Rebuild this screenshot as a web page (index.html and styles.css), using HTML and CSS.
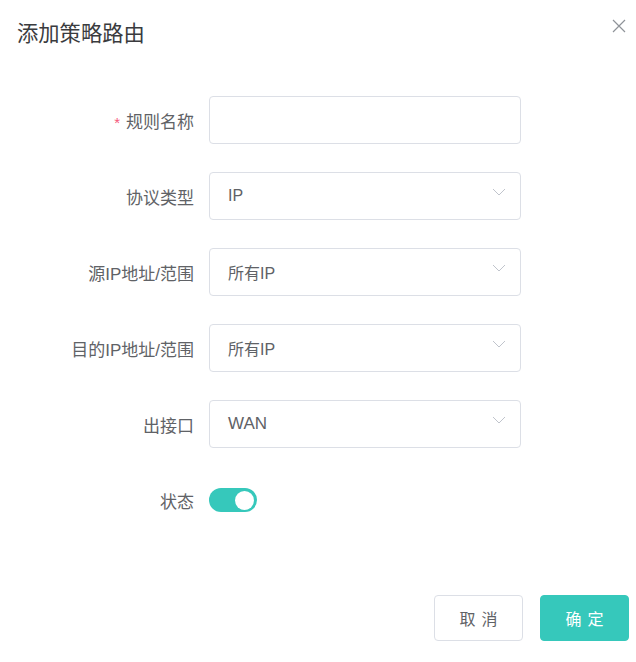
FILE: index.html
```html
<!DOCTYPE html>
<html lang="zh-CN">
<head>
<meta charset="utf-8">
<title>添加策略路由</title>
<link rel="stylesheet" href="styles.css">
</head>
<body>
<div class="dialog">
  <div class="header">
    <span class="title">添加策略路由</span>
    <svg class="close" width="14" height="14" viewBox="0 0 14 14"><path d="M1 1L13 13M13 1L1 13" stroke="#8f9399" stroke-width="1.2" fill="none"/></svg>
  </div>
  <div class="form">
    <div class="row">
      <label class="label"><span class="req">*</span>规则名称</label>
      <div class="control input"></div>
    </div>
    <div class="row">
      <label class="label">协议类型</label>
      <div class="control select"><span>IP</span><svg class="chev" width="14" height="8" viewBox="0 0 14 8"><path d="M1 1L7 7L13 1" stroke="#c0c4cc" stroke-width="1" fill="none"/></svg></div>
    </div>
    <div class="row">
      <label class="label">源IP地址/范围</label>
      <div class="control select"><span>所有IP</span><svg class="chev" width="14" height="8" viewBox="0 0 14 8"><path d="M1 1L7 7L13 1" stroke="#c0c4cc" stroke-width="1" fill="none"/></svg></div>
    </div>
    <div class="row">
      <label class="label">目的IP地址/范围</label>
      <div class="control select"><span>所有IP</span><svg class="chev" width="14" height="8" viewBox="0 0 14 8"><path d="M1 1L7 7L13 1" stroke="#c0c4cc" stroke-width="1" fill="none"/></svg></div>
    </div>
    <div class="row">
      <label class="label">出接口</label>
      <div class="control select"><span class="wan">WAN</span><svg class="chev" width="14" height="8" viewBox="0 0 14 8"><path d="M1 1L7 7L13 1" stroke="#c0c4cc" stroke-width="1" fill="none"/></svg></div>
    </div>
    <div class="row">
      <label class="label">状态</label>
      <div class="switch"><span class="knob"></span></div>
    </div>
  </div>
  <div class="footer">
    <button class="btn btn-cancel">取消</button>
    <button class="btn btn-ok">确定</button>
  </div>
</div>
</body>
</html>
```
FILE: styles.css
```css
html, body {
  margin: 0;
  padding: 0;
  background: #ffffff;
}
body {
  font-family: "Liberation Sans", "Noto Sans CJK SC", sans-serif;
  color: #606266;
}
.dialog {
  width: 636px;
  height: 662px;
  display: flex;
  flex-direction: column;
}
.header {
  display: flex;
  justify-content: space-between;
  align-items: center;
  padding: 16px 10px 0 17px;
  height: 32px;
}
.title {
  font-family: "Noto Sans CJK SC", sans-serif;
  font-size: 21.3px;
  line-height: 32px;
  color: #3a3b3e;
}
.close {
  margin-top: -12px;
}
.form {
  margin-top: 48px;
  display: flex;
  flex-direction: column;
  gap: 28px;
}
.row {
  display: flex;
  align-items: center;
  height: 48px;
}
.label {
  width: 194px;
  text-align: right;
  font-size: 17px;
  color: #606266;
  margin-right: 15px;
  flex-shrink: 0;
}
.req {
  color: #f5587b;
  margin-right: 6px;
  font-size: 15px;
}
.control {
  box-sizing: border-box;
  width: 312px;
  height: 48px;
  border: 1px solid #dcdfe6;
  border-radius: 4px;
  background: #fff;
}
.select {
  display: flex;
  align-items: center;
  justify-content: space-between;
  padding: 0 14px 0 18px;
  font-size: 16px;
  color: #606266;
}
.wan {
  font-size: 17px;
}
.chev {
  margin-top: -8px;
}
.switch {
  box-sizing: border-box;
  width: 48px;
  height: 24px;
  border-radius: 12px;
  background: #36c8bb;
  display: flex;
  align-items: center;
  justify-content: flex-end;
  padding-right: 3px;
}
.knob {
  width: 19px;
  height: 19px;
  border-radius: 50%;
  background: #fff;
}
.footer {
  margin-top: auto;
  margin-bottom: 21px;
  display: flex;
  justify-content: flex-end;
  gap: 17px;
  padding-right: 7px;
}
.btn {
  box-sizing: border-box;
  width: 89px;
  height: 46px;
  border-radius: 4px;
  font-family: "Noto Sans CJK SC", sans-serif;
  font-size: 16px;
  letter-spacing: 6px;
  text-indent: 6px;
  cursor: pointer;
}
.btn-cancel {
  background: #fff;
  border: 1px solid #dcdfe6;
  color: #606266;
}
.btn-ok {
  background: #36c8bb;
  border: 1px solid #36c8bb;
  color: #fff;
}
```
